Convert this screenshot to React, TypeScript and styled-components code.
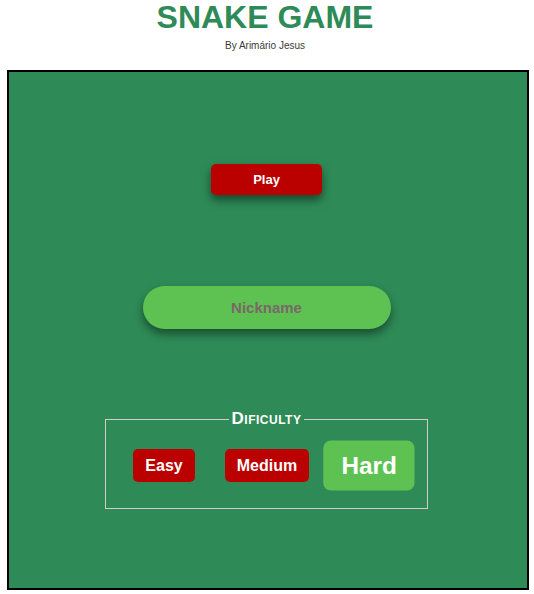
import React from "react";
import styled, { createGlobalStyle } from "styled-components";

const GlobalStyle = createGlobalStyle`
  html, body {
    margin: 0;
    padding: 0;
    background: #ffffff;
    font-family: "Liberation Sans", Arial, sans-serif;
  }
`;

const Header = styled.header`
  display: flex;
  flex-direction: column;
  align-items: center;
  padding: 1px 4px 0 0;
`;

const Title = styled.h1`
  margin: 0;
  font-size: 32px;
  line-height: 32px;
  font-weight: 700;
  color: #2e8b57;
`;

const Byline = styled.p`
  margin: 7px 0 0;
  font-size: 10px;
  line-height: 12px;
  color: #3a3a3a;
`;

const Board = styled.main`
  box-sizing: content-box;
  width: 515px;
  height: 516px;
  margin: 18px 0 0 7px;
  padding: 0 3px 0 0;
  border: 2px solid #000;
  background: #2e8b57;
  display: flex;
  flex-direction: column;
  align-items: center;
`;

const PlayButton = styled.button`
  margin-top: 92px;
  width: 111px;
  height: 31px;
  border: none;
  border-radius: 5px;
  background: #bb0000;
  color: #fff;
  font-family: "Liberation Sans", Arial, sans-serif;
  font-weight: 700;
  font-size: 13px;
  box-shadow: 0 5px 10px rgba(0, 0, 0, 0.5);
  cursor: pointer;
`;

const NicknameInput = styled.input`
  margin-top: 91px;
  box-sizing: border-box;
  width: 248px;
  height: 43px;
  border: none;
  border-radius: 22px;
  background: #5ec253;
  text-align: center;
  font-family: "Liberation Sans", Arial, sans-serif;
  font-weight: 700;
  font-size: 15px;
  color: #333;
  outline: none;
  box-shadow: 0 5px 10px rgba(0, 0, 0, 0.45);
  &::placeholder {
    color: #7a6868;
    opacity: 1;
  }
`;

const Fieldset = styled.fieldset`
  margin: 80px 0 0;
  box-sizing: border-box;
  width: 323px;
  min-width: 0;
  padding: 20px 0 26px;
  border: 1px solid #d6caca;
`;

const Legend = styled.legend`
  margin: 0 auto;
  padding: 0 3px;
  font-size: 17px;
  font-weight: 700;
  font-variant: small-caps;
  letter-spacing: 0.5px;
  color: #fff;
`;

const LevelRow = styled.div`
  display: flex;
  justify-content: center;
  align-items: center;
  gap: 30px;
  height: 33px;
`;

const LevelButton = styled.button<{ $active?: boolean }>`
  border: none;
  border-radius: 5px;
  padding: 7px 12px;
  line-height: 19px;
  font-family: "Liberation Sans", Arial, sans-serif;
  font-weight: 700;
  font-size: 16px;
  color: #fff;
  background: ${(p) => (p.$active ? "#5ec253" : "#bb0000")};
  transform: ${(p) => (p.$active ? "scale(1.52)" : "none")};
  cursor: pointer;
`;

export default function App() {
  return (
    <>
      <GlobalStyle />
      <Header>
        <Title>SNAKE GAME</Title>
        <Byline>By Arimário Jesus</Byline>
      </Header>
      <Board>
        <PlayButton>Play</PlayButton>
        <NicknameInput placeholder="Nickname" />
        <Fieldset>
          <Legend>Dificulty</Legend>
          <LevelRow>
            <LevelButton>Easy</LevelButton>
            <LevelButton>Medium</LevelButton>
            <LevelButton $active>Hard</LevelButton>
          </LevelRow>
        </Fieldset>
      </Board>
    </>
  );
}
